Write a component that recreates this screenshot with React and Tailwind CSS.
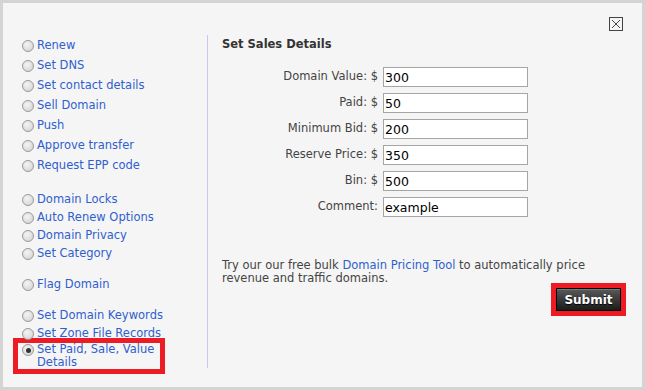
import React from "react";

const groups = [
  { rowH: "h-5", gap: "", items: ["Renew", "Set DNS", "Set contact details", "Sell Domain", "Push", "Approve transfer", "Request EPP code"] },
  { rowH: "h-[18px]", gap: "mt-[15px]", items: ["Domain Locks", "Auto Renew Options", "Domain Privacy", "Set Category"] },
  { rowH: "h-[18px]", gap: "mt-[13px]", items: ["Flag Domain"] },
  { rowH: "h-[18px]", gap: "mt-[13px]", items: ["Set Domain Keywords", "Set Zone File Records"] },
];

const fields = [
  { label: "Domain Value: $", value: "300" },
  { label: "Paid: $", value: "50" },
  { label: "Minimum Bid: $", value: "200" },
  { label: "Reserve Price: $", value: "350" },
  { label: "Bin: $", value: "500" },
  { label: "Comment:", value: "example" },
];

function Radio({ checked }) {
  return (
    <span className="flex h-[12px] w-[12px] shrink-0 items-center justify-center rounded-full border border-[#9a9a9a] bg-[radial-gradient(circle_at_40%_35%,#f4f4f4,#cfcfcf)]">
      {checked && <span className="h-[5px] w-[5px] rounded-full bg-[#333]" />}
    </span>
  );
}

export default function App() {
  return (
    <div className="relative h-[390px] w-[645px] border-[3px] border-[#d4d4d4] bg-[#f5f5f5] font-['DejaVu_Sans',sans-serif] text-[11.5px]">
      <button className="absolute right-[19px] top-[14px] flex h-[14px] w-[14px] items-center justify-center border border-[#444] bg-[#f5f5f5]">
        <svg width="10" height="10" viewBox="0 0 10 10">
          <path d="M1 1 L9 9 M9 1 L1 9" stroke="#444" strokeWidth="1" />
        </svg>
      </button>

      <div className="flex">
        <div className="w-[204px] pl-[19px] pt-[33px]">
          {groups.map((g, gi) => (
            <div key={gi} className={g.gap}>
              {g.items.map((it) => (
                <div key={it} className={`flex items-center gap-[3px] ${g.rowH}`}>
                  <Radio />
                  <span className="leading-none text-[#2f5fcf]">{it}</span>
                </div>
              ))}
            </div>
          ))}
          <div className="ml-[-9px] mt-[-5px] flex w-[152px] items-start gap-[3px] border-[5px] border-[#ed1c24] pl-[4px]">
            <span className="mt-[1px]">
              <Radio checked />
            </span>
            <span className="leading-[13px] text-[#2f5fcf]">Set Paid, Sale, Value Details</span>
          </div>
        </div>

        <div className="mt-[32px] flex h-[333px] w-[419px] flex-col border-l border-[#c5c9f0] pl-[14px]">
          <div className="mt-[2px] font-bold leading-[14px] text-[#333]">Set Sales Details</div>
          <div className="mt-[16px] flex flex-col gap-[6px]">
            {fields.map((f) => (
              <div key={f.label} className="flex items-center">
                <span className="w-[156px] text-right text-[#444]">{f.label}</span>
                <input
                  readOnly
                  value={f.value}
                  className="ml-[5px] h-[20px] w-[145px] border border-[#a5a5a5] bg-white px-[1px] font-['DejaVu_Sans',sans-serif] text-[12.5px] text-black outline-none"
                />
              </div>
            ))}
          </div>
          <p className="mt-[42px] w-[404px] leading-[13px] text-[#444]">
            Try our our free bulk <span className="text-[#2f5fcf]">Domain Pricing Tool</span> to automatically price
            revenue and traffic domains.
          </p>
          <div className="mt-[-2px] flex w-[404px] justify-end">
            <div className="border-[5px] border-[#ed1c24]">
              <button className="h-[23px] w-[65px] border border-black bg-gradient-to-b from-[#5a5a5a] to-[#1c1c1c] text-[12px] font-bold text-white shadow-[inset_0_1px_0_#777] [text-shadow:0_1px_1px_#000]">
                Submit
              </button>
            </div>
          </div>
        </div>
      </div>
    </div>
  );
}
